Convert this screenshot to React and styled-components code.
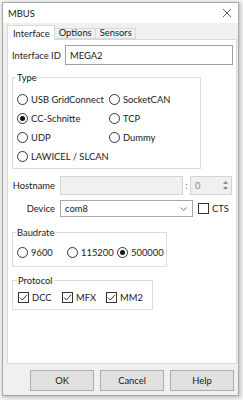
import React from 'react';
import styled, { createGlobalStyle } from 'styled-components';

const Global = createGlobalStyle`
  html, body { margin: 0; padding: 0; background: #f3f3f3; }
  body {
    width: 243px; height: 400px; overflow: hidden;
    font-family: Lato, "Noto Sans", sans-serif;
    font-size: 9.4px; color: #1a1a1a;
  }
  * { box-sizing: border-box; }
`;

const Desktop = styled.div`
  padding: 2px 4px 4px 2px;
  height: 400px;
`;

const Window = styled.div`
  width: 237px;
  height: 394px;
  display: flex;
  flex-direction: column;
  border: 1px solid #a8a8a8;
  box-shadow: 1px 1px 4px rgba(0, 0, 0, 0.28);
  background: #f0f0f0;
`;

const TitleBar = styled.div`
  height: 20px;
  flex: none;
  background: #fff;
  display: flex;
  align-items: center;
  justify-content: space-between;
  padding: 0 6px 0 5px;
`;

const Body = styled.div`
  flex: 1;
  display: flex;
  flex-direction: column;
  padding: 2px 1px 4px 4px;
  min-height: 0;
`;

const TabStrip = styled.div`
  height: 14px;
  flex: none;
  display: flex;
  align-items: flex-end;
  position: relative;
  z-index: 1;
`;

const Tab = styled.div`
  height: ${p => (p.$active ? '15px' : '11px')};
  margin-bottom: ${p => (p.$active ? '-1px' : '0')};
  padding: ${p => (p.$active ? '0 4px 0 5px' : '0 3px 0 4px')};
  display: flex;
  align-items: ${p => (p.$active ? 'center' : 'flex-end')};
  background: ${p => (p.$active ? '#fff' : '#f0f0f0')};
  border: 1px solid #d9d9d9;
  border-bottom: ${p => (p.$active ? 'none' : '1px solid #d9d9d9')};
  border-left: ${p => (p.$first || p.$active ? '1px solid #d9d9d9' : 'none')};
  line-height: 11px;
  white-space: nowrap;
`;

const Page = styled.div`
  flex: 1;
  background: #fff;
  border: 1px solid #d9d9d9;
  padding: 5px 3px 0 4px;
  display: flex;
  flex-direction: column;
`;

const FieldRow = styled.div`
  display: flex;
  align-items: center;
  height: ${p => p.$h || 20}px;
  margin-top: ${p => p.$mt || 0}px;
`;

const Label = styled.div`
  width: ${p => p.$w || 48}px;
  flex: none;
  text-align: ${p => (p.$left ? 'left' : 'right')};
  padding-right: 5px;
  white-space: nowrap;
`;

const TextInput = styled.div`
  flex: ${p => (p.$w ? 'none' : '1')};
  width: ${p => (p.$w ? `${p.$w}px` : 'auto')};
  height: 100%;
  border: 1px solid ${p => (p.$disabled ? '#d4d4d4' : '#a0a0a0')};
  background: ${p => (p.$disabled ? '#f0f0f0' : '#fff')};
  color: ${p => (p.$disabled ? '#8a8a8a' : '#1a1a1a')};
  display: flex;
  align-items: center;
  padding-left: 4px;
  position: relative;
`;

const Colon = styled.span`
  width: 7px;
  text-align: center;
  color: #666;
`;

const SpinArrows = styled.div`
  position: absolute;
  right: 3px;
  top: 2px;
  bottom: 2px;
  display: flex;
  flex-direction: column;
  justify-content: space-around;
`;

const Select = styled.div`
  width: 133px;
  height: 100%;
  border: 1px solid #a8a8a8;
  background: #fff;
  display: flex;
  align-items: center;
  justify-content: space-between;
  padding: 0 5px 0 4px;
`;

const Group = styled.fieldset`
  margin: ${p => p.$mt || 0}px 0 0 0;
  width: ${p => p.$w}px;
  border: 1px solid #dcdcdc;
  padding: ${p => p.$pad};
  min-width: 0;
`;

const Legend = styled.legend`
  padding: 0 1px;
  margin-left: -1px;
  line-height: 13px;
`;

const OptionGrid = styled.div`
  display: grid;
  grid-template-columns: repeat(${p => p.$cols}, ${p => p.$cw}px);
  grid-auto-rows: 19px;
  align-items: center;
  margin-top: ${p => p.$mt || 0}px;
`;

const Option = styled.div`
  display: flex;
  align-items: center;
  gap: 3px;
  white-space: nowrap;
`;

const RadioCircle = styled.span`
  width: 11px;
  height: 11px;
  flex: none;
  border-radius: 50%;
  border: 1px solid #333;
  background: #fff;
  display: inline-flex;
  align-items: center;
  justify-content: center;
  &::after {
    content: "";
    width: 5px;
    height: 5px;
    border-radius: 50%;
    background: #111;
    display: ${p => (p.$checked ? 'block' : 'none')};
  }
`;

const CheckBox = styled.span`
  width: 11px;
  height: 11px;
  flex: none;
  border: 1px solid #333;
  background: #fff;
  display: inline-flex;
  align-items: center;
  justify-content: center;
`;

const Spacer = styled.div`
  width: ${p => p.$w}px;
  flex: none;
`;

const ButtonBar = styled.div`
  flex: none;
  display: flex;
  justify-content: flex-end;
  gap: 6px;
  padding: 6px 3px 0 0;
`;

const Button = styled.div`
  width: 64px;
  height: 21px;
  background: #e1e1e1;
  border: 1px solid #adadad;
  display: flex;
  align-items: center;
  justify-content: center;
`;

const Radio = ({ checked, children }) => (
  <Option>
    <RadioCircle $checked={checked} />
    <span>{children}</span>
  </Option>
);

const Check = ({ checked, children }) => (
  <Option>
    <CheckBox>
      {checked && (
        <svg width="9" height="9" viewBox="0 0 9 9">
          <path d="M1 4.6 L3.4 7 L8 1.8" fill="none" stroke="#333" strokeWidth="1" />
        </svg>
      )}
    </CheckBox>
    <span>{children}</span>
  </Option>
);

export default function App() {
  return (
    <>
      <Global />
      <Desktop>
        <Window>
          <TitleBar>
            <span>MBUS</span>
            <svg width="10" height="10" viewBox="0 0 10 10">
              <path d="M1 1 L9 9 M9 1 L1 9" stroke="#555" strokeWidth="0.9" />
            </svg>
          </TitleBar>
          <Body>
            <TabStrip>
              <Tab $active $first>Interface</Tab>
              <Tab>Options</Tab>
              <Tab>Sensors</Tab>
            </TabStrip>
            <Page>
              <FieldRow $h={20}>
                <Label $w={53} $left>Interface ID</Label>
                <TextInput>MEGA2</TextInput>
              </FieldRow>

              <Group $w={189} $mt={6} $pad="0 4px 2px 4px">
                <Legend>Type</Legend>
                <OptionGrid $cols={2} $cw={92} $mt={6}>
                  <Radio>USB GridConnect</Radio>
                  <Radio>SocketCAN</Radio>
                  <Radio checked>CC-Schnitte</Radio>
                  <Radio>TCP</Radio>
                  <Radio>UDP</Radio>
                  <Radio>Dummy</Radio>
                  <Radio>LAWICEL / SLCAN</Radio>
                </OptionGrid>
              </Group>

              <FieldRow $h={19} $mt={7}>
                <Label>Hostname</Label>
                <TextInput $disabled $w={123} />
                <Colon>:</Colon>
                <TextInput $disabled $w={42}>
                  0
                  <SpinArrows>
                    <svg width="5" height="3" viewBox="0 0 5 3"><path d="M0 3 L2.5 0 L5 3 Z" fill="#8a8a8a" /></svg>
                    <svg width="5" height="3" viewBox="0 0 5 3"><path d="M0 0 L2.5 3 L5 0 Z" fill="#8a8a8a" /></svg>
                  </SpinArrows>
                </TextInput>
              </FieldRow>

              <FieldRow $h={17} $mt={5}>
                <Label>Device</Label>
                <Select>
                  <span>com8</span>
                  <svg width="7" height="4" viewBox="0 0 7 4">
                    <path d="M0.5 0.5 L3.5 3.5 L6.5 0.5" fill="none" stroke="#666" strokeWidth="0.9" />
                  </svg>
                </Select>
                <Spacer $w={5} />
                <Check>CTS</Check>
              </FieldRow>

              <Group $w={155} $mt={9} $pad="0 4px 4px 4px">
                <Legend>Baudrate</Legend>
                <OptionGrid $cols={3} $cw={50} $mt={4}>
                  <Radio>9600</Radio>
                  <Radio>115200</Radio>
                  <Radio checked>500000</Radio>
                </OptionGrid>
              </Group>

              <Group $w={141} $mt={7} $pad="0 4px 2px 5px">
                <Legend>Protocol</Legend>
                <OptionGrid $cols={3} $cw={44} $mt={1}>
                  <Check checked>DCC</Check>
                  <Check checked>MFX</Check>
                  <Check checked>MM2</Check>
                </OptionGrid>
              </Group>
            </Page>
            <ButtonBar>
              <Button>OK</Button>
              <Button>Cancel</Button>
              <Button>Help</Button>
            </ButtonBar>
          </Body>
        </Window>
      </Desktop>
    </>
  );
}
